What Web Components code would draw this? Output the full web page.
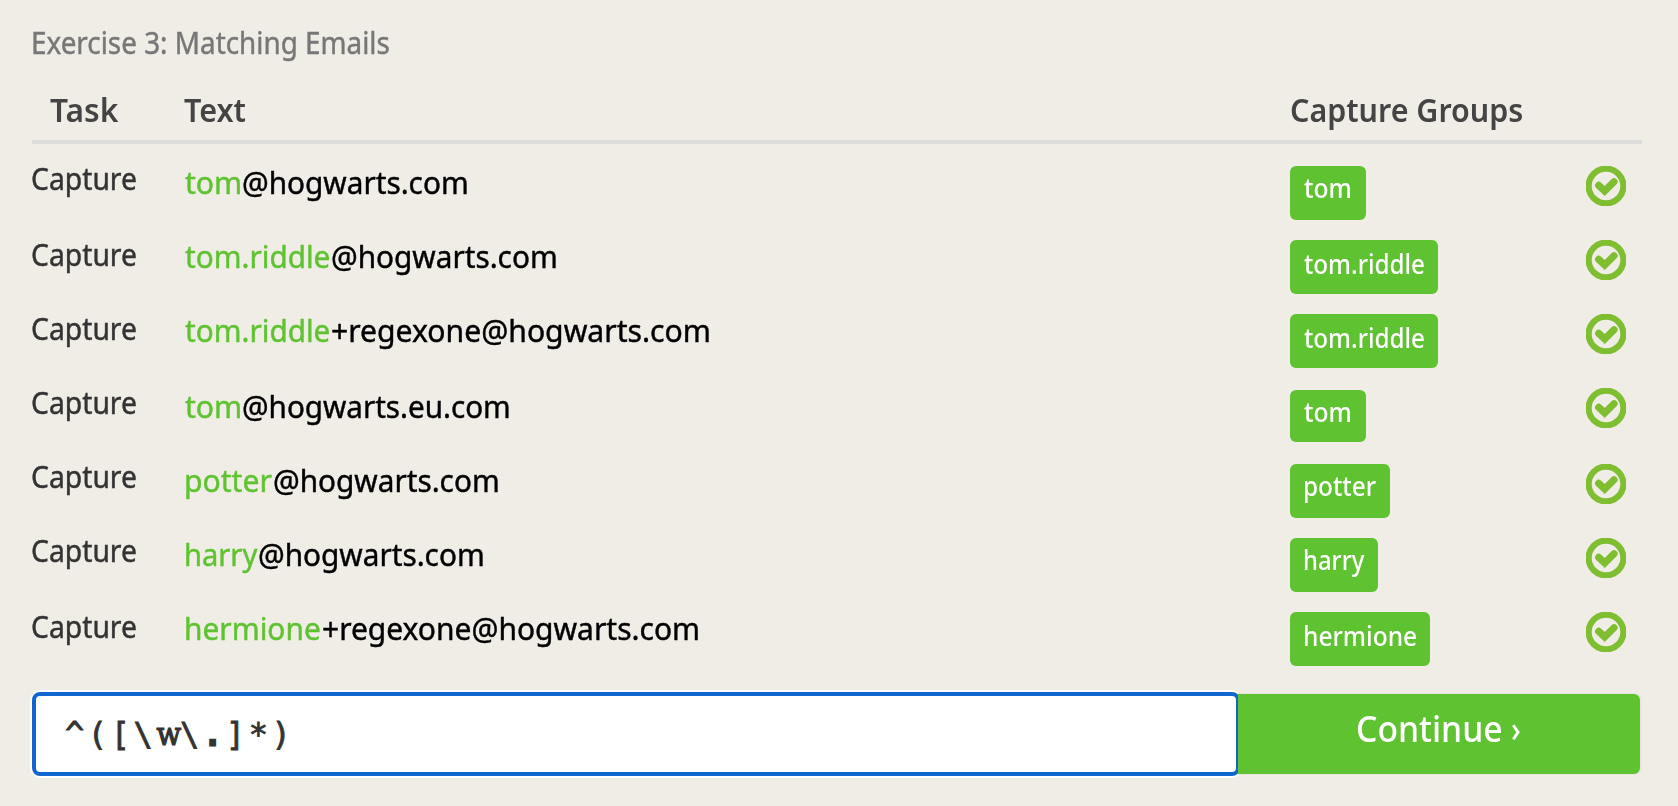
<!DOCTYPE html>
<html lang="en">
<head>
<meta charset="utf-8">
<title>Exercise 3: Matching Emails</title>
<style>
html, body { margin: 0; height: 100%; background: #f0ede6; overflow: hidden; }
body { font-family: "Noto Sans", "Open Sans", sans-serif; color: #333; }
</style>
</head>
<body>
<regex-exercise></regex-exercise>
<script>
/* A line of text whose ink spans exactly `w` pixels and whose baseline is `base` pixels below its top. */
const ruler = document.createElement('canvas').getContext('2d');
customElements.define('fit-text', class extends HTMLElement {
  connectedCallback() {
    if (this.shadowRoot) return;
    const w = +this.getAttribute('w'), size = +this.getAttribute('size');
    const weight = this.getAttribute('weight') || 400;
    const base = +this.getAttribute('base');
    ruler.font = `${weight} ${size}px "Noto Sans", "Open Sans", sans-serif`;
    const m = ruler.measureText(this.textContent);
    const k = w / (m.actualBoundingBoxRight + m.actualBoundingBoxLeft);
    const stroke = weight == 400 ? .45 : 0;
    this.attachShadow({ mode: 'open' }).innerHTML = `
      <style>
        :host { display: flow-root; flex: none; width: ${w}px; height: ${base + 8}px; white-space: nowrap; }
        span { display: block; width: max-content; font: ${weight} ${size}px/40px "Noto Sans", "Open Sans", sans-serif;
          margin-top: ${base - 20 - 0.388 * size}px; margin-left: ${m.actualBoundingBoxLeft * k}px;
          -webkit-text-stroke: ${stroke}px currentColor;
          transform-origin: 0 0; transform: scaleX(${k}); }
      </style><span><slot></slot></span>`;
  }
});

customElements.define('check-icon', class extends HTMLElement {
  connectedCallback() {
    this.attachShadow({ mode: 'open' }).innerHTML = `
      <style>:host { display: block; width: 40px; height: 40px; overflow: hidden; } svg { display: block; filter: blur(.7px); }</style>
      <svg width="40" height="40" viewBox="0 0 40 40" fill="none" stroke="#7fbd31">
        <circle cx="20" cy="20" r="17.4" stroke-width="6.2"/>
        <path d="M12.7 19.4L18.7 25L28 15.8" stroke-width="7.2" stroke-linecap="round"/>
      </svg>`;
  }
});

customElements.define('group-badge', class extends HTMLElement {
  connectedCallback() {
    this.attachShadow({ mode: 'open' }).innerHTML = `
      <style>:host { display: block; box-sizing: border-box; border-radius: 6px; background: #5fc331; color: #fff; }</style>
      <slot></slot>`;
  }
});

customElements.define('task-row', class extends HTMLElement {
  connectedCallback() {
    const d = JSON.parse(this.getAttribute('data'));
    this.attachShadow({ mode: 'open' }).innerHTML = `
      <style>
        :host { display: grid; grid-template-columns: 152px 1106px 296px 40px; height: ${d.h}px; align-items: start; }
        .mail { display: flex; color: #000; padding-left: ${d.x - 184}px; }
        .hit { color: #5fc331; margin-right: ${d.gap}px; }
        group-badge { width: ${d.bw}px; height: ${d.bh}px; margin-top: ${d.by}px; padding-left: ${d.bx}px; }
      </style>
      <div class="task"><fit-text w="104" size="30.3" base="${d.b1 + 1}">Capture</fit-text></div>
      <div class="mail"><fit-text class="hit" w="${d.w1}" size="31.4" base="${d.b2}">${d.hit}</fit-text><fit-text w="${d.w2 - .7}" size="31.4" base="${d.b2}">${d.rest}</fit-text></div>
      <group-badge><fit-text w="${d.tw}" size="26.3" weight="500" base="${d.b3}">${d.hit}</fit-text></group-badge>
      <check-icon></check-icon>`;
  }
});

customElements.define('table-head', class extends HTMLElement {
  connectedCallback() {
    this.attachShadow({ mode: 'open' }).innerHTML = `
      <style>
        :host { display: grid; grid-template-columns: 152px 1106px 1fr; height: 60px; border-bottom: 4px solid #dcdddb; color: #444; }
        fit-text:first-of-type { margin-left: 18.2px; }
        fit-text:last-of-type { margin-left: .7px; }
      </style>
      <fit-text w="68.5" size="32" weight="600" base="42">Task</fit-text>
      <fit-text w="62" size="32" weight="600" base="42">Text</fit-text>
      <fit-text w="231.6" size="32" weight="600" base="42">Capture Groups</fit-text>`;
  }
});

customElements.define('pattern-input', class extends HTMLElement {
  connectedCallback() {
    this.attachShadow({ mode: 'open' }).innerHTML = `
      <style>
        :host { display: block; box-sizing: border-box; width: 1208px; height: 84px; border: 4px solid #1165cf;
          border-radius: 8px; background: #fff; box-shadow: 0 0 0 2px #fff; color: #333; padding-left: 29px; }
        .p { font: 32px/76px "DejaVu Sans Mono", monospace; letter-spacing: 3.6px; white-space: pre; -webkit-text-stroke: .8px #333; }
        .w { font-family: "DejaVu Serif Condensed", "DejaVu Serif", serif; font-stretch: condensed; letter-spacing: -1px; -webkit-text-stroke-width: 1.2px; }
        .dot { -webkit-text-stroke-width: 3px; }
      </style>
      <div class="p">^([\\<span class="w">w</span>\\<span class="dot">.</span>]*)</div>`;
  }
});

customElements.define('continue-button', class extends HTMLElement {
  connectedCallback() {
    this.attachShadow({ mode: 'open' }).innerHTML = `
      <style>
        :host { display: flex; box-sizing: border-box; width: 402px; height: 80px; margin: 2px 0 0 -2px; position: relative;
          padding-left: 120.3px; gap: 9.7px; color: #fff; background: #5fc331; border-radius: 0 6px 6px 0; box-shadow: 1px 0 0 1px #e9e6df; clip-path: inset(-2px -2px -2px 0); }
      </style>
      <fit-text w="144" size="36.3" weight="500" base="48">Continue</fit-text>
      <fit-text w="8.3" size="36.3" weight="500" base="48">›</fit-text>`;
  }
});

customElements.define('regex-exercise', class extends HTMLElement {
  connectedCallback() {
    const rows = [
      { h: 74, hit: 'tom', rest: '@hogwarts.com', x: 185, w1: 55, gap: 2.9, w2: 224.2, b1: 24, b2: 28, b3: 32, bw: 76, bh: 54, by: 0, bx: 14, tw: 46 },
      { h: 74, hit: 'tom.riddle', rest: '@hogwarts.com', x: 185, w1: 144.7, gap: 2.3, w2: 224.2, b1: 26, b2: 28, b3: 34, bw: 148, bh: 54, by: 0, bx: 14, tw: 120 },
      { h: 74, hit: 'tom.riddle', rest: '+regexone@hogwarts.com', x: 185, w1: 144.7, gap: 2.3, w2: 377.4, b1: 26, b2: 28, b3: 34, bw: 148, bh: 54, by: 0, bx: 14, tw: 120 },
      { h: 76, hit: 'tom', rest: '@hogwarts.eu.com', x: 185, w1: 55, gap: 2.9, w2: 266.3, b1: 26, b2: 30, b3: 34, bw: 76, bh: 52, by: 2, bx: 14, tw: 46 },
      { h: 74, hit: 'potter', rest: '@hogwarts.com', x: 185.7, w1: 86, gap: 1.9, w2: 224.2, b1: 24, b2: 28, b3: 32, bw: 100, bh: 54, by: 0, bx: 14.7, tw: 71 },
      { h: 74, hit: 'harry', rest: '@hogwarts.com', x: 185.7, w1: 72.3, gap: 1.4, w2: 224.2, b1: 24, b2: 28, b3: 32, bw: 88, bh: 54, by: 0, bx: 14.7, tw: 59.6 },
      { h: 78, hit: 'hermione', rest: '+regexone@hogwarts.com', x: 185.7, w1: 134.2, gap: 2.8, w2: 375.6, b1: 26, b2: 28, b3: 34, bw: 140, bh: 54, by: 0, bx: 14.7, tw: 111.3 }
    ];
    /* Badge text baselines are counted from the badge's own top edge. */
    rows.forEach(r => { r.b3 -= r.by; });
    this.attachShadow({ mode: 'open' }).innerHTML = `
      <style>
        :host { display: block; box-sizing: border-box; width: 1678px; height: 806px; padding: 0 36px 0 32px; }
        .title { height: 80px; color: #777; padding-left: 1.2px; }
        .rows { padding-top: 22px; height: 526px; }
        .bar { display: flex; align-items: flex-start; }
      </style>
      <div class="title"><fit-text w="356.5" size="30.4" base="55">Exercise 3: Matching Emails</fit-text></div>
      <table-head></table-head>
      <div class="rows">${rows.map(r => `<task-row data='${JSON.stringify(r)}'></task-row>`).join('')}</div>
      <div class="bar"><pattern-input></pattern-input><continue-button></continue-button></div>`;
  }
});
</script>
</body>
</html>
